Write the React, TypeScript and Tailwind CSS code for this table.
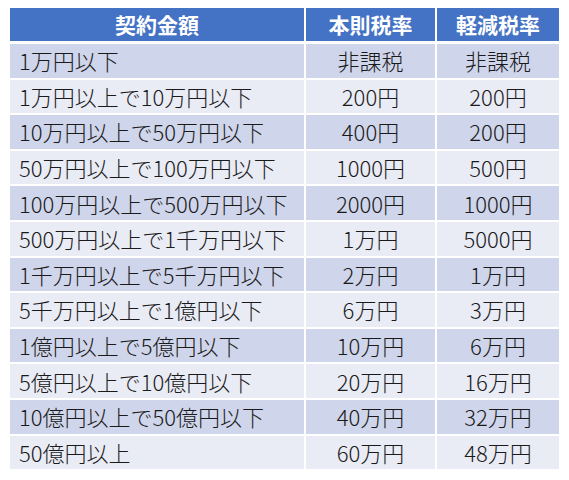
import React from "react";

const rows: [string, string, string][] = [
  ["1万円以下", "非課税", "非課税"],
  ["1万円以上で10万円以下", "200円", "200円"],
  ["10万円以上で50万円以下", "400円", "200円"],
  ["50万円以上で100万円以下", "1000円", "500円"],
  ["100万円以上で500万円以下", "2000円", "1000円"],
  ["500万円以上で1千万円以下", "1万円", "5000円"],
  ["1千万円以上で5千万円以下", "2万円", "1万円"],
  ["5千万円以上で1億円以下", "6万円", "3万円"],
  ["1億円以上で5億円以下", "10万円", "6万円"],
  ["5億円以上で10億円以下", "20万円", "16万円"],
  ["10億円以上で50億円以下", "40万円", "32万円"],
  ["50億円以上", "60万円", "48万円"],
];

export default function App() {
  return (
    <div
      className="w-[569px] h-[480px] bg-white pt-[8px] pl-[10px]"
      style={{ fontFamily: '"Noto Sans CJK JP", "Noto Sans", sans-serif' }}
    >
      <div className="grid grid-cols-[294px_129px_122px] gap-x-[2px] w-[549px]">
        <div className="h-[33px] bg-[#4472C4] text-white font-bold text-[21px] flex items-center justify-center">
          契約金額
        </div>
        <div className="h-[33px] bg-[#4472C4] text-white font-bold text-[21px] flex items-center justify-center">
          本則税率
        </div>
        <div className="h-[33px] bg-[#4472C4] text-white font-bold text-[21px] flex items-center justify-center">
          軽減税率
        </div>
      </div>
      <div className="mt-[3px] flex flex-col gap-y-[2px] w-[549px]">
        {rows.map((r, i) => {
          const bg = i % 2 === 0 ? "bg-[#CFD5EA]" : "bg-[#E9EBF5]";
          return (
            <div key={i} className="grid grid-cols-[294px_129px_122px] gap-x-[2px] h-[33.6px]">
              <div className={`${bg} flex items-center pl-[9px] text-[22px] text-[#1a1a1a] font-light`}>{r[0]}</div>
              <div className={`${bg} flex items-center justify-center text-[22px] text-[#1a1a1a] font-light`}>{r[1]}</div>
              <div className={`${bg} flex items-center justify-center text-[22px] text-[#1a1a1a] font-light`}>{r[2]}</div>
            </div>
          );
        })}
      </div>
    </div>
  );
}
